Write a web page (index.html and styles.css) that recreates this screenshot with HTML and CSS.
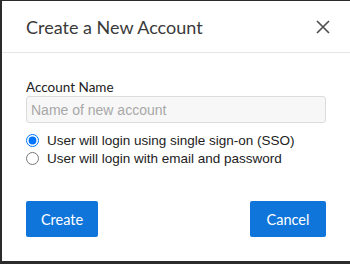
FILE: index.html
```html
<!DOCTYPE html>
<html lang="en">
<head>
    <meta charset="UTF-8">
    <meta name="viewport" content="width=device-width, initial-scale=1.0">
    <title>Create a New Account</title>
    <link rel="stylesheet" href="styles.css">
</head>
<body>
    <div class="modal">
        <div class="modal-header">
            <h1 class="modal-title">Create a New Account</h1>
            <button class="close-btn" aria-label="Close">
                <svg width="14" height="14" viewBox="0 0 14 14">
                    <path d="M1 1 L13 13 M13 1 L1 13" stroke="#505050" stroke-width="1.7" fill="none"/>
                </svg>
            </button>
        </div>
        <div class="modal-body">
            <label class="field-label" for="account-name">Account Name</label>
            <input id="account-name" class="text-input" type="text" placeholder="Name of new account">
            <div class="radio-group">
                <label class="radio-row">
                    <input type="radio" name="login" checked>
                    <span>User will login using single sign-on (SSO)</span>
                </label>
                <label class="radio-row">
                    <input type="radio" name="login">
                    <span>User will login with email and password</span>
                </label>
            </div>
        </div>
        <div class="modal-footer">
            <button class="btn btn-create">Create</button>
            <button class="btn btn-cancel">Cancel</button>
        </div>
    </div>
</body>
</html>
```

FILE: styles.css
```css
*{
    margin: 0;
    padding: 0;
    box-sizing: border-box;
}
body{
    background-color: #2b2b2b;
    font-family: Lato, "Liberation Sans", sans-serif;
    color: #333;
}
.modal{
    width: 348px;
    height: 260px;
    margin: 1px 0 0 2px;
    background-color: #fff;
    display: flex;
    flex-direction: column;
}
.modal-header{
    height: 52px;
    border-bottom: 1px solid #e6e6e6;
    display: flex;
    align-items: center;
    justify-content: space-between;
    padding: 0 20px 0 24px;
}
.modal-title{
    font-size: 18px;
    font-weight: 400;
    color: #3a3a3a;
}
.close-btn{
    border: none;
    background: none;
    width: 14px;
    height: 14px;
    display: flex;
    cursor: pointer;
}
.modal-body{
    padding: 26px 24px 0 24px;
    display: flex;
    flex-direction: column;
}
.field-label{
    font-size: 13.5px;
    line-height: 16px;
    color: #222;
}
.text-input{
    margin-top: 1px;
    width: 300px;
    height: 27px;
    border: 1px solid #dcdcdc;
    border-radius: 3px;
    background-color: #f7f7f7;
    padding: 0 4px;
    font-family: "Liberation Sans", Arial, sans-serif;
    font-size: 14px;
    color: #333;
}
.text-input::placeholder{
    color: #a8a8a8;
}
.radio-group{
    margin-top: 8px;
    display: flex;
    flex-direction: column;
}
.radio-row{
    display: flex;
    align-items: center;
    height: 18px;
    font-family: "Liberation Sans", Arial, sans-serif;
    font-size: 13.5px;
    color: #222;
}
.radio-row input{
    width: 13px;
    height: 13px;
    margin: 0 8px 0 0;
}
.modal-footer{
    margin-top: auto;
    padding: 0 24px 24px 24px;
    display: flex;
    justify-content: space-between;
}
.btn{
    height: 36px;
    border: none;
    border-radius: 2px;
    background-color: #1075db;
    color: #fff;
    font-family: Lato, "Liberation Sans", sans-serif;
    font-size: 14.5px;
    cursor: pointer;
}
.btn-create{
    width: 72px;
}
.btn-cancel{
    width: 76px;
}
```
